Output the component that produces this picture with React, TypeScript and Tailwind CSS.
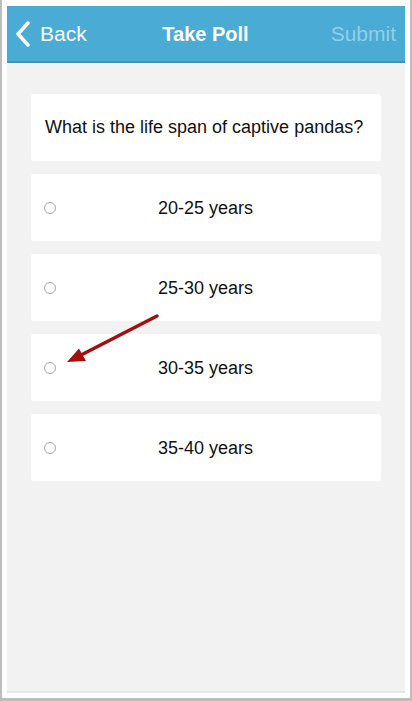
import React from "react";

const options = ["20-25 years", "25-30 years", "30-35 years", "35-40 years"];

function Radio() {
  return <span className="w-[12px] h-[12px] rounded-full border border-[#a8a8a8] bg-white shrink-0" />;
}

export default function App() {
  return (
    <div
      className="w-[412px] h-[701px] bg-white border-l-2 border-r-2 border-b-[3px] border-[#bdbdbd] pl-[5px] pr-[5px] pt-[6px] relative"
      style={{ fontFamily: '"Liberation Sans", Arial, sans-serif' }}
    >
      <div className="w-[398px] h-[687px] bg-[#f2f2f2] flex flex-col border-b-2 border-[#e6e6e6]">
        {/* header */}
        <header className="h-[57px] bg-[#4aabd4] border-b-2 border-[#3f95ba] flex items-center justify-between pl-[8px] pr-[9px] text-white">
          <div className="flex items-center gap-[9px] w-[100px]">
            <svg width="16" height="26" viewBox="0 0 16 26" fill="none">
              <path d="M13 2 L3 13 L13 24" stroke="white" strokeWidth="3.5" strokeLinecap="round" strokeLinejoin="round" />
            </svg>
            <span className="text-[21px] leading-none">Back</span>
          </div>
          <span className="text-[20px] font-bold leading-none">Take Poll</span>
          <span className="text-[21px] leading-none text-[#8fd0ea] w-[100px] text-right">Submit</span>
        </header>

        <main className="flex flex-col gap-[13px] px-[24px] pt-[31px]">
          <div className="h-[67px] bg-white rounded-[3px] flex items-center px-[14px] text-[18px] text-[#111]">
            What is the life span of captive pandas?
          </div>
          {options.map((o) => (
            <div key={o} className="h-[67px] bg-white rounded-[3px] flex items-center pl-[13px] text-[18px] text-[#111]">
              <Radio />
              <span className="flex-1 text-center pr-[26px] pt-[1px]">{o}</span>
            </div>
          ))}
        </main>
      </div>

      {/* annotation arrow */}
      <svg className="absolute left-0 top-0 pointer-events-none" width="412" height="701">
        <line x1="155" y1="316" x2="81" y2="354" stroke="#a30f0f" strokeWidth="3.5" strokeLinecap="round" />
        <polygon points="65,362 77,348.5 84,361" fill="#a30f0f" />
      </svg>
    </div>
  );
}
